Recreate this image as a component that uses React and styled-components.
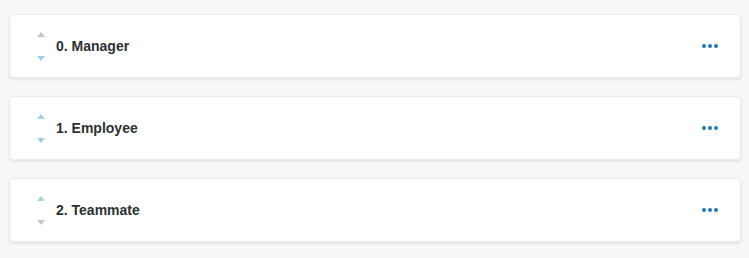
import React from "react";
import styled, { createGlobalStyle } from "styled-components";

const GlobalStyle = createGlobalStyle`
  body {
    margin: 0;
    background: #f6f7f7;
    font-family: "Liberation Sans", Arial, sans-serif;
  }
`;

const List = styled.div`
  display: flex;
  flex-direction: column;
  gap: 18px;
  padding: 14px 8px 14px 9px;
`;

const Card = styled.div`
  display: flex;
  align-items: center;
  height: 62px;
  padding: 0 22px 0 27px;
  background: #ffffff;
  border: 1px solid #e9ebeb;
  border-radius: 4px;
  box-shadow: 0 2px 3px rgba(0, 0, 0, 0.08);
`;

const Arrows = styled.div`
  display: flex;
  flex-direction: column;
  justify-content: space-between;
  height: 29px;
  margin-right: 11px;
`;

const Arrow = styled.span`
  width: 0;
  height: 0;
  border-left: 4.5px solid transparent;
  border-right: 4.5px solid transparent;
  ${(p) =>
    p.$down
      ? `border-top: 5.5px solid ${p.$color};`
      : `border-bottom: 5.5px solid ${p.$color};`}
`;

const Title = styled.div`
  flex: 1;
  font-size: 14px;
  font-weight: 700;
  color: #2b3134;
`;

const More = styled.button`
  display: flex;
  gap: 2px;
  padding: 0;
  border: none;
  background: none;
  cursor: pointer;
`;

const Dot = styled.span`
  width: 4px;
  height: 4px;
  border-radius: 50%;
  background: #1b7db4;
`;

const GRAY = "#c3c7c9";
const BLUE = "#9fd0e0";

const roles = [
  { name: "0. Manager", up: GRAY, down: BLUE },
  { name: "1. Employee", up: BLUE, down: BLUE },
  { name: "2. Teammate", up: "#a6d8d6", down: GRAY },
];

export default function App() {
  return (
    <>
      <GlobalStyle />
      <List>
        {roles.map((r) => (
          <Card key={r.name}>
            <Arrows>
              <Arrow $color={r.up} />
              <Arrow $down $color={r.down} />
            </Arrows>
            <Title>{r.name}</Title>
            <More aria-label="More">
              <Dot />
              <Dot />
              <Dot />
            </More>
          </Card>
        ))}
      </List>
    </>
  );
}
